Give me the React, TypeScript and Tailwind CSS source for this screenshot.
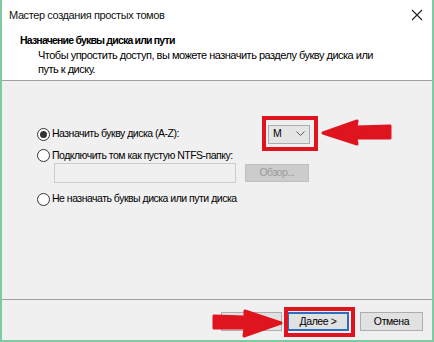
import React from "react";

function Radio({ checked }: { checked?: boolean }) {
  return (
    <span className="w-[13px] h-[13px] rounded-full border border-[#333] bg-white flex items-center justify-center shrink-0">
      {checked && <span className="w-[7px] h-[7px] rounded-full bg-[#333]" />}
    </span>
  );
}

export default function App() {
  return (
    <div className="w-[434px] h-[342px] flex flex-col bg-white border-x-2 border-b-2 border-[#7fc9a3] font-['Liberation_Sans',sans-serif] text-black relative overflow-hidden">
      {/* title bar */}
      <div className="h-[30px] shrink-0 flex items-center justify-between pl-[7px] pr-[8px]">
        <span className="text-[11px] tracking-[-0.4px] text-[#111]">Мастер создания простых томов</span>
        <svg width="12" height="12" viewBox="0 0 12 12" className="mr-[1px]">
          <path d="M1 1 L11 11 M11 1 L1 11" stroke="#222" strokeWidth="1.1" />
        </svg>
      </div>

      {/* header */}
      <div className="h-[51px] shrink-0 border-b border-[#a0a0a0] pt-[3px]">
        <div className="pl-[18px] text-[10.5px] tracking-[-0.8px] font-bold leading-[14px]">Назначение буквы диска или пути</div>
        <div className="pl-[36px] pt-[1px] text-[11px] tracking-[-0.5px] leading-[14px] w-[375px]">
          Чтобы упростить доступ, вы можете назначить разделу букву диска или путь к диску.
        </div>
      </div>

      {/* body */}
      <div className="h-[219px] shrink-0 bg-[#f0f0f0] border-b border-[#a0a0a0] pl-[35px] pt-[43px] text-[10.5px] tracking-[-0.5px]">
        <div className="h-[20px] flex items-center">
          <div className="w-[231px] flex items-center gap-[2px]">
            <Radio checked />
            <span>Назначить букву диска (A-Z):</span>
          </div>
          <div className="w-[42px] h-[19px] bg-[#e5e5e5] border border-[#adadad] flex items-center justify-between pl-[4px] pr-[4px]">
            <span className="tracking-normal">M</span>
            <svg width="9" height="6" viewBox="0 0 9 6">
              <path d="M0.5 0.5 L4.5 4.5 L8.5 0.5" fill="none" stroke="#555" strokeWidth="1" />
            </svg>
          </div>
        </div>
        <div className="mt-[4px] h-[15px] flex items-center gap-[2px]">
          <Radio />
          <span>Подключить том как пустую NTFS-папку:</span>
        </div>
        <div className="pl-[17px] h-[20px] flex items-center gap-[9px]">
          <div className="w-[182px] h-[20px] border border-[#cccccc] bg-[#f0f0f0]" />
          <div className="w-[64px] h-[18px] bg-[#cccccc] border border-[#bfbfbf] flex items-center justify-center text-[#9a9a9a]">
            Обзор...
          </div>
        </div>
        <div className="mt-[8px] h-[16px] flex items-center gap-[2px]">
          <Radio />
          <span>Не назначать буквы диска или пути диска</span>
        </div>
      </div>

      {/* footer */}
      <div className="flex-1 bg-[#f0f0f0] flex justify-end items-start pt-[12px] pr-[9px] text-[10.5px] tracking-[-0.4px]">
        <div className="w-[61px] h-[19px] bg-[#e1e1e1] border border-[#adadad] flex items-center justify-center">
          &lt; Назад
        </div>
        <div className="ml-[5px] w-[62px] h-[19px] bg-[#e1e1e1] border-2 border-[#2a6fbf] flex items-center justify-center">
          Далее &gt;
        </div>
        <div className="ml-[11px] w-[63px] h-[19px] bg-[#e1e1e1] border border-[#adadad] flex items-center justify-center">
          Отмена
        </div>
      </div>

      {/* red annotations */}
      <div className="absolute left-[260px] top-[116px] w-[56px] h-[35px] border-[4px] border-[#e0141e]" />
      <div className="absolute left-[282px] top-[307px] w-[71px] h-[30px] border-[4px] border-[#e0141e]" />
      <svg className="absolute left-[318px] top-[117px]" width="74" height="32" viewBox="0 0 74 32">
        <path d="M3 16 L37 4 L36 10 L70 9 L70 21 L36 21 L37 27 Z" fill="#e0141e" stroke="#e0141e" strokeWidth="3" strokeLinejoin="round" />
      </svg>
      <svg className="absolute left-[208px] top-[308px]" width="74" height="32" viewBox="0 0 74 32">
        <path d="M71 15 L35 3 L35 9 L4 8 L4 20 L35 20 L34 28 Z" fill="#e0141e" stroke="#e0141e" strokeWidth="3" strokeLinejoin="round" />
      </svg>
    </div>
  );
}
